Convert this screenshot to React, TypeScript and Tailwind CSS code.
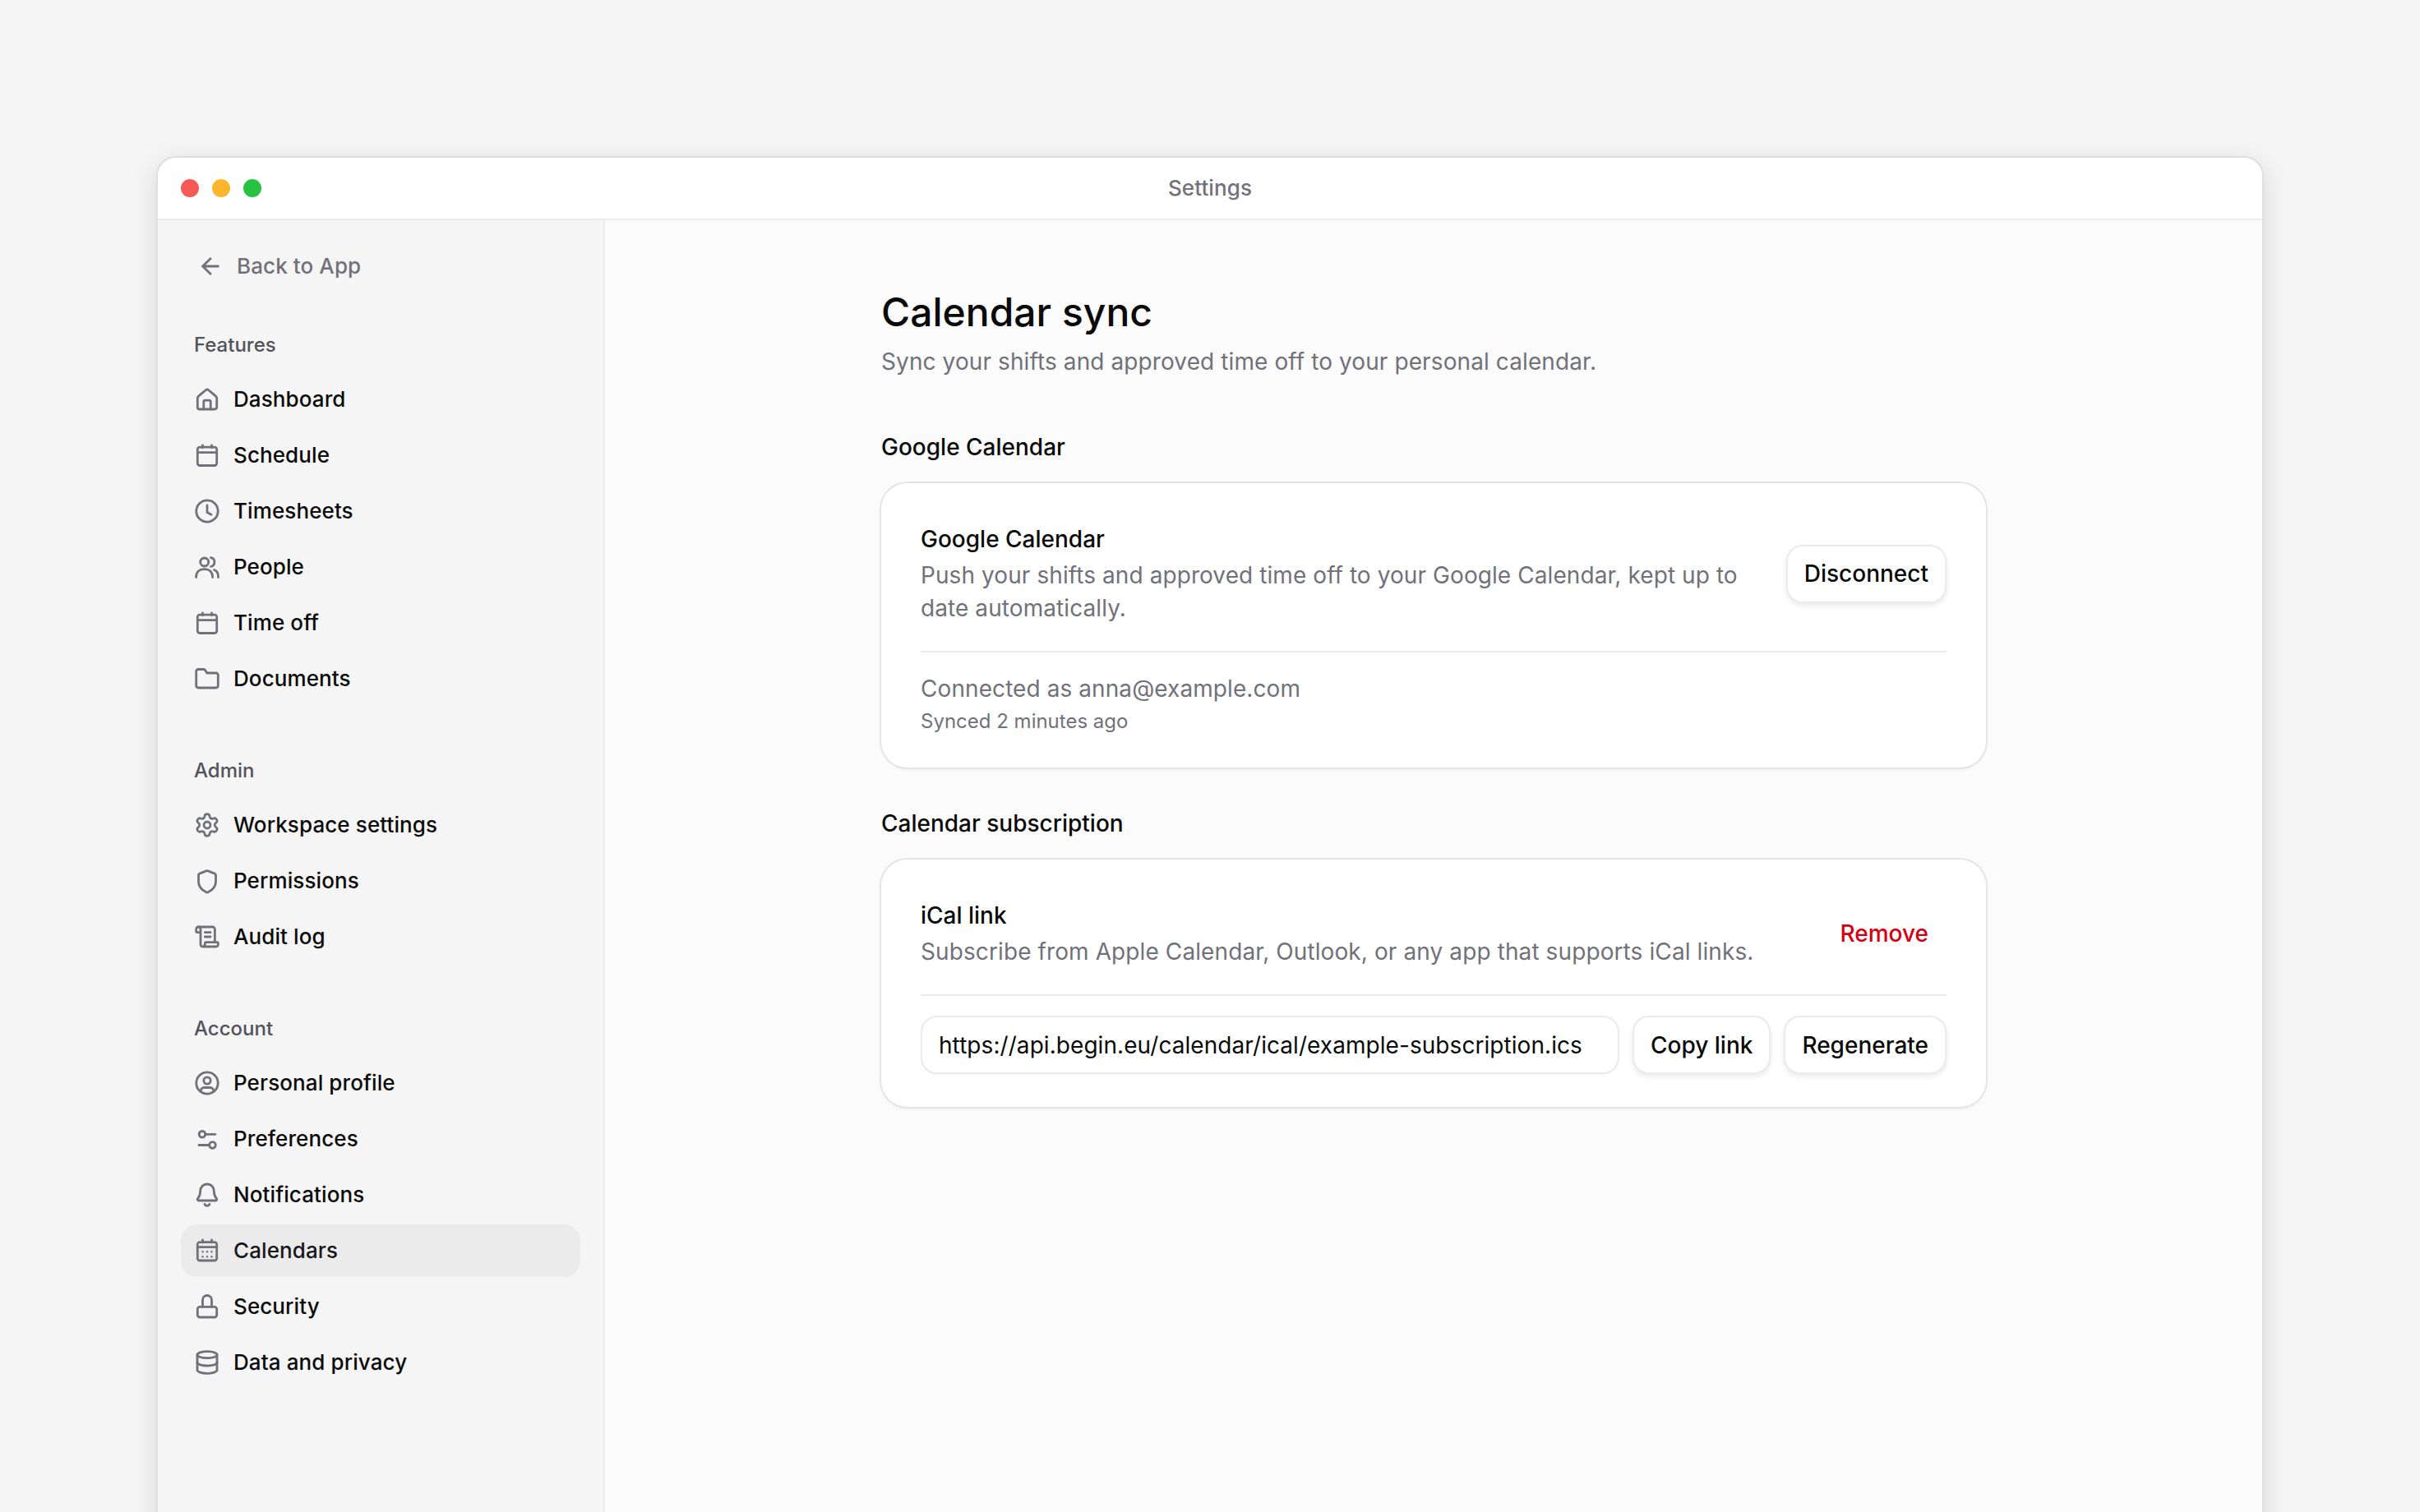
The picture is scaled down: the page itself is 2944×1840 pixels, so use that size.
import { ArrowLeft, Database, ScrollText, Settings } from "lucide-react";
import type { ReactNode } from "react";

function Glyph({ children }: { children: ReactNode }) {
  return (
    <svg viewBox="0 0 32 32" fill="none" stroke="currentColor" strokeWidth="2.8" strokeLinecap="round" strokeLinejoin="round" className="w-8 h-8 shrink-0 text-[#71717a]">
      {children}
    </svg>
  );
}

const HomeIcon = () => (
  <Glyph>
    <path d="M4.300 14.500c0-1 .4-1.800 1.200-2.400l8.700-7.400a2.800 2.800 0 0 1 3.600 0l8.700 7.400c.8.600 1.200 1.400 1.200 2.400v11a2.500 2.500 0 0 1-2.500 2.500H6.800a2.500 2.500 0 0 1-2.500-2.500z" />
    <path d="M11.800 28v-9a1.800 1.800 0 0 1 1.800-1.800h4.800a1.800 1.800 0 0 1 1.800 1.800v9" />
  </Glyph>
);
const CalendarIcon = () => (
  <Glyph>
    <rect x="4.300" y="6.200" width="23.400" height="22.300" rx="2.800" />
    <path d="M4.300 12.600h23.400M10.500 3.800v3M21.500 3.800v3" />
  </Glyph>
);
const ClockIcon = () => (
  <Glyph>
    <circle cx="16" cy="16" r="13.200" />
    <path d="M16 9v8.500l5 2.700" />
  </Glyph>
);
const PeopleIcon = () => (
  <Glyph>
    <circle cx="12.700" cy="10" r="5" />
    <path d="M2.600 28.500c0-6 3.600-9.800 10-9.800s10 3.800 10 9.800" />
    <path d="M20.500 4.700a5.500 5.500 0 0 1 0 10.800M24.500 19.500c3.200 1 5 4.400 5 9" />
  </Glyph>
);
const FolderIcon = () => (
  <Glyph>
    <path d="M2.700 7A2.500 2.500 0 0 1 5.200 4.500h6.300c.8 0 1.500.3 2 .9l2.300 3.600h11a2.500 2.500 0 0 1 2.500 2.500v13a2.500 2.500 0 0 1-2.500 2.500H5.200a2.500 2.500 0 0 1-2.500-2.500z" />
  </Glyph>
);
const ShieldIcon = () => (
  <Glyph>
    <path d="M14.800 3.900a3 3 0 0 1 2.400 0l8 3.200c.9.4 1.300 1 1.300 2v7.900c0 5.400-3.500 9.700-9.100 12.600a3 3 0 0 1-2.800 0C9 26.700 5.500 22.400 5.500 17V9.100c0-1 .4-1.600 1.300-2z" />
  </Glyph>
);
const ProfileIcon = () => (
  <Glyph>
    <circle cx="16" cy="16" r="13.200" />
    <circle cx="16" cy="13" r="4.200" />
    <path d="M8.200 26.500v-1a4 4 0 0 1 4-4h7.600a4 4 0 0 1 4 4v1" />
  </Glyph>
);
const SlidersIcon = () => (
  <Glyph>
    <circle cx="10" cy="10.300" r="3.800" />
    <circle cx="22.500" cy="23.500" r="3.800" />
    <path d="M14 10.300h12M6 23.500h12.500" />
  </Glyph>
);
const BellIcon = () => (
  <Glyph>
    <path d="M16 3c-5 0-8.300 3.700-8.300 8.500 0 5-1.200 6.800-3 9-.9 1-.3 2.500 1 2.500h20.600c1.300 0 1.900-1.500 1-2.500-1.800-2.200-3-4-3-9C24.300 6.700 21 3 16 3z" />
    <path d="M13 27.500c.6 1.200 1.700 1.800 3 1.800s2.400-.6 3-1.800" />
  </Glyph>
);
const CalendarDaysIcon = () => (
  <Glyph>
    <rect x="4.300" y="5.600" width="23.400" height="22.400" rx="2.800" />
    <path d="M4.300 11.600h23.400M10.500 3v3M21.500 3v3" />
    <g fill="currentColor" stroke="none">
      <circle cx="10.500" cy="17.300" r="1.200" />
      <circle cx="16" cy="17.300" r="1.200" />
      <circle cx="21.500" cy="17.300" r="1.200" />
      <circle cx="10.500" cy="23.200" r="1.200" />
      <circle cx="16" cy="23.200" r="1.200" />
      <circle cx="21.500" cy="23.200" r="1.200" />
    </g>
  </Glyph>
);
const LockIcon = () => (
  <Glyph>
    <rect x="4.300" y="16.300" width="23.400" height="12.700" rx="2.800" />
    <path d="M10.500 16.300V8a5.500 5.500 0 0 1 11 0v8.300" />
  </Glyph>
);

const lucideClass = "w-8 h-8 shrink-0 text-[#71717a]";

const groups = [
  {
    label: "Features",
    gap: "mb-[61px]",
    items: [
      { name: "Dashboard", icon: <HomeIcon /> },
      { name: "Schedule", icon: <CalendarIcon /> },
      { name: "Timesheets", icon: <ClockIcon /> },
      { name: "People", icon: <PeopleIcon /> },
      { name: "Time off", icon: <CalendarIcon /> },
      { name: "Documents", icon: <FolderIcon /> },
    ],
  },
  {
    label: "Admin",
    gap: "mb-[61px]",
    items: [
      { name: "Workspace settings", icon: <Settings className={lucideClass} strokeWidth={2.1} /> },
      { name: "Permissions", icon: <ShieldIcon /> },
      { name: "Audit log", icon: <ScrollText className={lucideClass} strokeWidth={2.1} /> },
    ],
  },
  {
    label: "Account",
    gap: "mb-[60px]",
    items: [
      { name: "Personal profile", icon: <ProfileIcon /> },
      { name: "Preferences", icon: <SlidersIcon /> },
      { name: "Notifications", icon: <BellIcon /> },
      { name: "Calendars", icon: <CalendarDaysIcon />, active: true },
      { name: "Security", icon: <LockIcon /> },
      { name: "Data and privacy", icon: <Database className={lucideClass} strokeWidth={2.1} /> },
    ],
  },
];

function Button({ children }: { children: ReactNode }) {
  return (
    <button className="h-[71px] px-[20px] shrink-0 rounded-[20px] bg-white border-2 border-[#ebebeb] text-[28px] font-medium text-[#0a0a0a] shadow-[0_3px_6px_rgba(0,0,0,0.09)]">
      {children}
    </button>
  );
}

export default function App() {
  return (
    <div className="h-[1840px] overflow-hidden bg-[#f5f5f5] pt-[190px] px-[190px] font-[Inter,sans-serif]">
      <div className="h-[1800px] flex flex-col rounded-t-[24px] border-2 border-[#dedede] bg-white shadow-[0_8px_32px_rgba(0,0,0,0.12)] overflow-hidden">
        {/* Title bar */}
        <header className="relative h-[76px] shrink-0 flex items-center justify-center border-b-2 border-[#ececec] bg-white">
          <div className="absolute left-[28px] top-[26px] flex gap-[16px]">
            <span className="w-[22px] h-[22px] rounded-full bg-[#f65a55]" />
            <span className="w-[22px] h-[22px] rounded-full bg-[#fbb62e]" />
            <span className="w-[22px] h-[22px] rounded-full bg-[#27c23f]" />
          </div>
          <span className="mb-[2px] text-[26px] font-medium tracking-[0.1px] text-[#71717a]">Settings</span>
        </header>

        <div className="flex flex-1">
          {/* Sidebar */}
          <aside className="w-[544px] shrink-0 bg-[#f5f5f5] border-r-2 border-[#ececec] pt-[24px] pl-[28px] pr-[28px]">
            <a className="h-[64px] flex items-center gap-[16px] pl-[20px] text-[26px] font-medium tracking-[0.1px] text-[#71717a]">
              <ArrowLeft className="w-8 h-8" strokeWidth={2.1} />
              <span className="mb-[2px]">Back to App</span>
            </a>
            {groups.map((g) => (
              <section key={g.label} className={`mt-[45px] ${g.gap}`}>
                <h3 className="h-[36px] mb-[17px] pl-[16px] pt-[2px] flex items-center text-[24px] font-medium text-[#52525b]">{g.label}</h3>
                <ul className="flex flex-col gap-[4px]">
                  {g.items.map((it) => (
                    <li
                      key={it.name}
                      className={
                        it.active
                          ? "h-[64px] flex items-center gap-[16px] pl-[16px] rounded-[20px] bg-[#ebebeb] text-[26px] font-medium tracking-[0.1px] text-[#18181b]"
                          : "h-[64px] flex items-center gap-[16px] pl-[16px] rounded-[20px] text-[26px] font-medium tracking-[0.1px] text-[#0a0a0a]"
                      }
                    >
                      {it.icon}
                      <span className="mb-[2px]">{it.name}</span>
                    </li>
                  ))}
                </ul>
              </section>
            ))}
          </aside>

          {/* Main */}
          <main className="flex-1 bg-[#fbfbfb] pt-[84px]">
            <div className="w-[1344px] mx-auto">
              <h1 className="text-[48px] leading-[56px] font-medium text-[#0a0a0a]">Calendar sync</h1>
              <p className="mt-[12px] text-[28px] leading-[40px] tracking-[0.1px] text-[#71717a]">Sync your shifts and approved time off to your personal calendar.</p>

              <h2 className="mt-[64px] text-[28px] leading-[40px] font-medium text-[#0a0a0a]">Google Calendar</h2>
              <div className="mt-[24px] rounded-[32px] bg-white shadow-[0_0_0_2px_#e5e5e5,0_3px_4px_rgba(0,0,0,0.05)] px-[48px]">
                <div className="flex items-center justify-between gap-[48px] pt-[48px] pb-[32px] border-b-2 border-[#ececec]">
                  <div>
                    <div className="text-[28px] leading-[40px] font-medium text-[#0a0a0a]">Google Calendar</div>
                    <p className="mt-[4px] text-[28px] leading-[40px] tracking-[0.08px] text-[#71717a]">
                      Push your shifts and approved time off to your Google Calendar, kept up to date automatically.
                    </p>
                  </div>
                  <Button>Disconnect</Button>
                </div>
                <div className="pt-[24px] pb-[40px]">
                  <div className="text-[28px] leading-[40px] tracking-[0.08px] text-[#71717a]">Connected as anna@example.com</div>
                  <div className="mt-[4px] text-[24px] leading-[32px] text-[#71717a]">Synced 2 minutes ago</div>
                </div>
              </div>

              <h2 className="mt-[48px] text-[28px] leading-[40px] font-medium text-[#0a0a0a]">Calendar subscription</h2>
              <div className="mt-[24px] rounded-[32px] bg-white shadow-[0_0_0_2px_#e5e5e5,0_3px_4px_rgba(0,0,0,0.05)] px-[48px]">
                <div className="flex items-center justify-between gap-[48px] pt-[48px] pb-[32px] border-b-2 border-[#ececec]">
                  <div>
                    <div className="text-[28px] leading-[40px] font-medium text-[#0a0a0a]">iCal link</div>
                    <p className="mt-[4px] text-[28px] leading-[40px] tracking-[0.1px] text-[#71717a]">Subscribe from Apple Calendar, Outlook, or any app that supports iCal links.</p>
                  </div>
                  <button className="h-[70px] px-[22px] shrink-0 text-[28px] font-medium text-[#d40012]">Remove</button>
                </div>
                <div className="flex gap-[16px] pt-[24px] pb-[40px]">
                  <div className="flex-1 h-[71px] flex items-center px-[20px] rounded-[20px] border-2 border-[#ebebeb] bg-white text-[28px] tracking-[0.06px] whitespace-nowrap text-[#0a0a0a] shadow-[0_1px_2px_rgba(0,0,0,0.04)]">
                    https://api.begin.eu/calendar/ical/example-subscription.ics
                  </div>
                  <Button>Copy link</Button>
                  <Button>Regenerate</Button>
                </div>
              </div>
            </div>
          </main>
        </div>
      </div>
    </div>
  );
}
